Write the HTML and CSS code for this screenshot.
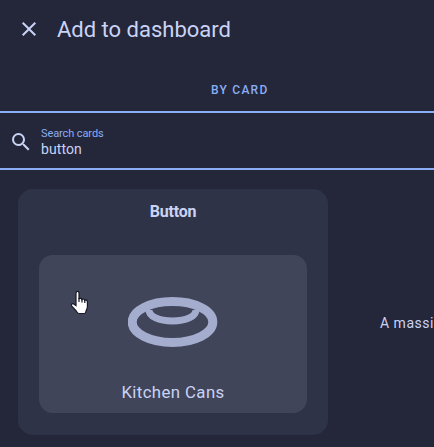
FILE: index.html
```html
<!DOCTYPE html>
<html lang="en">
<head>
<meta charset="utf-8">
<title>Add to dashboard</title>
<link rel="stylesheet" href="styles.css">
</head>
<body>
<header class="header">
  <svg class="close" viewBox="0 0 24 24"><path d="M19 6.41 17.59 5 12 10.59 6.41 5 5 6.41 10.59 12 5 17.59 6.41 19 12 13.41 17.59 19 19 17.59 13.41 12z"/></svg>
  <h1 class="title">Add to dashboard</h1>
</header>
<nav class="tabs"><span class="tab">BY CARD</span></nav>
<div class="search">
  <svg class="search-icon" viewBox="0 0 24 24"><path d="M9.5 3A6.5 6.5 0 0 1 16 9.5c0 1.61-.59 3.09-1.56 4.23l.27.27h.79l5 5-1.5 1.5-5-5v-.79l-.27-.27A6.52 6.52 0 0 1 9.5 16a6.5 6.5 0 0 1 0-13m0 2C7 5 5 7 5 9.5S7 14 9.5 14 14 12 14 9.5 12 5 9.5 5z"/></svg>
  <div class="field">
    <span class="label">Search cards</span>
    <span class="value">button</span>
  </div>
</div>
<main class="cards">
  <section class="card">
    <h2 class="card-title">Button</h2>
    <div class="preview">
      <svg class="ring" viewBox="0 0 90 50">
        <ellipse cx="44.5" cy="25" rx="40.3" ry="20.4" stroke-width="9"/>
        <path d="M21 13C21 19.5 31 24 44.5 24S68 19.5 68 13" stroke-width="7"/>
      </svg>
      <span class="name">Kitchen Cans</span>
    </div>
  </section>
  <section class="next"><p class="description">A massi</p></section>
</main>
<svg class="cursor" viewBox="0 0 20 26"><path d="M6 3.2C6 .8 9 .8 9 3.2V9c.4-1 2.7-.8 3 .6.7-1 2.5-.7 2.8.7.8-.8 2.6-.2 2.6 1.4v5c0 2.2-1.4 3.2-1.6 5.3-.1 1-.8 1.5-1.7 1.5H9.2c-1.2 0-1.9-.7-2.3-1.5-1-2-4.5-4.5-5.3-6.3-.6-1.5.8-2.4 2.1-1.8L6 15.6z"/><path class="fingers" d="M9 8v4M12 9v3.5M14.8 10v3"/></svg>
</body>
</html>
```
FILE: styles.css
```css
* { box-sizing: border-box; }
body {
  margin: 0;
  width: 434px;
  height: 447px;
  overflow: hidden;
  background: #24273a;
  color: #cad3f5;
  font-family: Roboto, sans-serif;
}
.header {
  display: flex;
  align-items: center;
  height: 58px;
  padding-left: 17px;
}
.close { width: 24px; height: 24px; fill: #cad3f5; }
.title {
  margin: 2px 0 0 16px;
  font-size: 22px;
  font-weight: 400;
  line-height: 28px;
}
.tabs {
  height: 55px;
  padding: 22px 0 0 211px;
  border-bottom: 2px solid #8aadf4;
}
.tab {
  display: block;
  color: #8aadf4;
  font-size: 12px;
  font-weight: 500;
  line-height: 20px;
  letter-spacing: 1.25px;
}
.search {
  display: flex;
  align-items: center;
  height: 57px;
  padding: 2px 0 0 9px;
  border-bottom: 2px solid #8aadf4;
}
.search-icon { width: 24px; height: 24px; fill: #cad3f5; }
.field {
  display: flex;
  flex-direction: column;
  margin-left: 8px;
}
.label {
  color: #8aadf4;
  font-size: 11px;
  line-height: 15px;
  letter-spacing: -.1px;
}
.value { font-size: 14px; line-height: 17px; letter-spacing: .1px; }
.cards {
  display: flex;
  gap: 20px;
  padding: 19px 0 0 18px;
}
.card {
  flex: none;
  width: 310px;
  height: 246px;
  padding: 13px 21px 0;
  border-radius: 15px;
  background: #2f3347;
}
.card-title {
  margin: 0 0 33px;
  font-size: 16px;
  font-weight: 700;
  line-height: 20px;
  letter-spacing: -.2px;
  text-align: center;
}
.preview {
  display: flex;
  flex-direction: column;
  align-items: center;
  height: 158px;
  padding-top: 42px;
  border-radius: 14px;
  background: #41455a;
}
.ring {
  width: 90px;
  height: 50px;
  fill: none;
  stroke: #a5adcf;
}
.name {
  margin-top: 35px;
  font-size: 16.8px;
  line-height: 20px;
  letter-spacing: .4px;
}
.next { padding: 124px 0 0 32px; }
.description {
  margin: 0;
  font-size: 14px;
  line-height: 20px;
  letter-spacing: .5px;
  white-space: nowrap;
}
.cursor {
  position: absolute;
  left: 70px;
  top: 290px;
  width: 20px;
  height: 26px;
  fill: #fff;
  stroke: #181926;
  stroke-width: 1.2;
}
.fingers { fill: none; }
```
